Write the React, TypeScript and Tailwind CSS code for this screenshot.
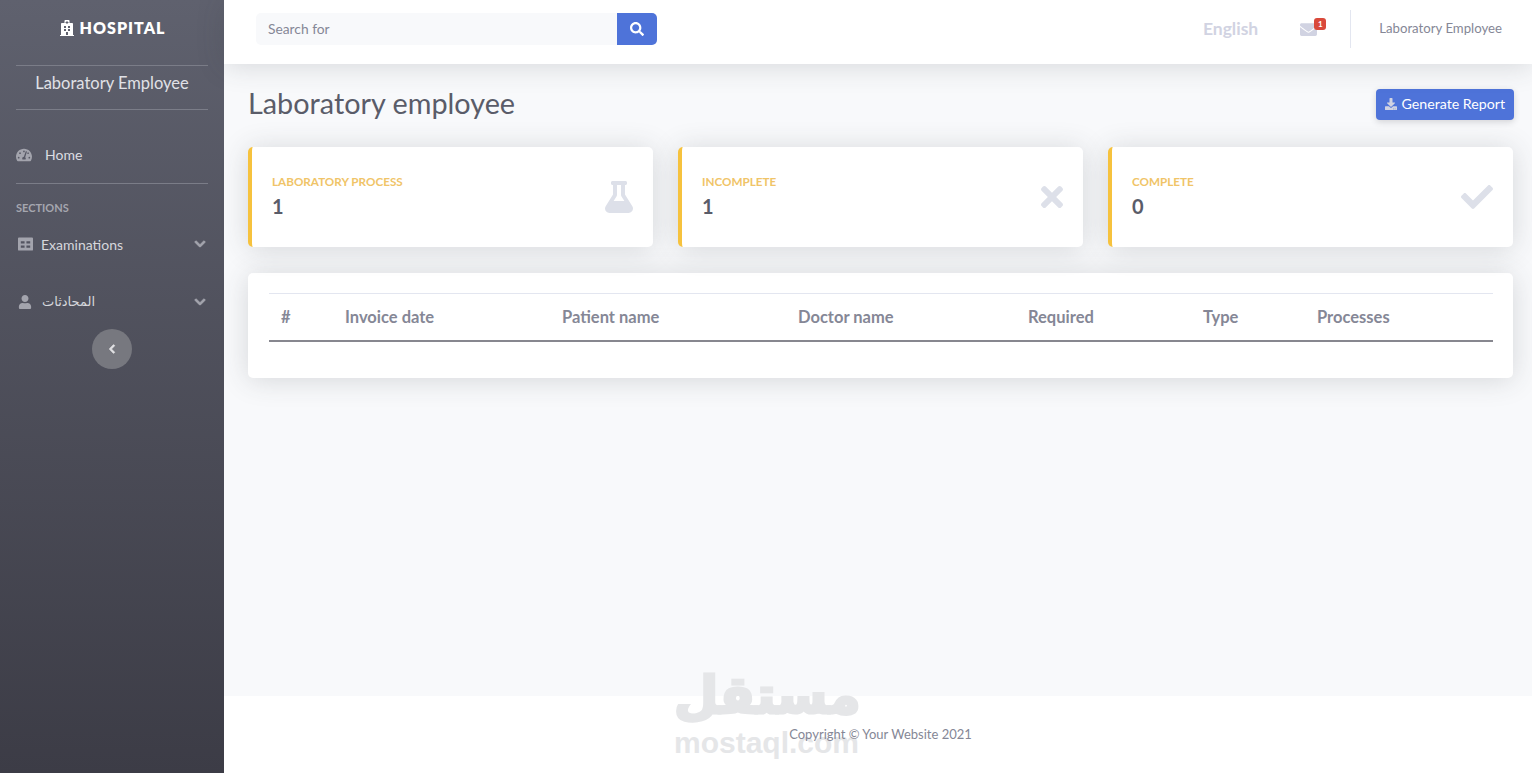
import {
  FaCheck,
  FaChevronDown,
  FaChevronLeft,
  FaDownload,
  FaEnvelope,
  FaFlask,
  FaHospital,
  FaSearch,
  FaTachometerAlt,
  FaTimes,
  FaUser,
} from 'react-icons/fa';
import type { IconType } from 'react-icons';

const stats: { title: string; value: string; Icon: IconType; iconClass: string }[] = [
  { title: 'LABORATORY PROCESS', value: '1', Icon: FaFlask, iconClass: 'w-[28px] h-[32px]' },
  { title: 'INCOMPLETE', value: '1', Icon: FaTimes, iconClass: 'w-[22px] h-[32px]' },
  { title: 'COMPLETE', value: '0', Icon: FaCheck, iconClass: 'w-[32px] h-[32px]' },
];

const columns = [
  { label: '#', width: 'w-[64px]' },
  { label: 'Invoice date', width: 'w-[217px]' },
  { label: 'Patient name', width: 'w-[236px]' },
  { label: 'Doctor name', width: 'w-[230px]' },
  { label: 'Required', width: 'w-[175px]' },
  { label: 'Type', width: 'w-[114px]' },
  { label: 'Processes', width: 'w-[188px]' },
];

function ExamIcon() {
  return (
    <svg viewBox="0 0 16 14" className="w-[15px] h-[14px] mr-[8px] ml-[2px] text-[#a3a4ad]" fill="currentColor">
      <path
        fillRule="evenodd"
        d="M1 0h14a1 1 0 0 1 1 1v12a1 1 0 0 1-1 1H1a1 1 0 0 1-1-1V1a1 1 0 0 1 1-1zM3 4v2.500h4V4zM9 4v2.500h4V4zM3 8.500V11h4V8.500zM9 8.500V11h4V8.500z"
      />
    </svg>
  );
}

function Sidebar() {
  return (
    <aside className="w-[224px] shrink-0 h-[773px] px-4 bg-gradient-to-b from-[#5f616e] to-[#3c3c46]">
      <div className="h-[65px] pb-[9px] flex items-center justify-center gap-[5px] text-white">
        <FaHospital size={16} />
        <span className="text-[16px] font-extrabold tracking-[1px]">HOSPITAL</span>
      </div>
      <div className="h-[45px] pb-[9px] border-y border-[#7b7d88] flex items-center justify-center text-[16.5px] text-[#e0e1e6]">
        Laboratory Employee
      </div>
      <div className="h-[74px] border-b border-[#7b7d88] pt-[35px] flex items-start gap-[13px] text-[14px] text-[#dcdde2]">
        <FaTachometerAlt size={16} className="mt-[2px] text-[#a3a4ad]" />
        <span className="leading-[20px]">Home</span>
      </div>
      <div className="mt-[18px] text-[11px] font-bold leading-[12px] text-[#a5a6af]">SECTIONS</div>
      <div className="mt-[20px] h-[20px] flex items-center text-[14px] text-[#d6d7dc]">
        <ExamIcon />
        <span>Examinations</span>
        <FaChevronDown size={12} className="ml-auto mr-[2px] text-[#a3a4ad] stroke-[40px]" />
      </div>
      <div className="mt-[38px] h-[20px] flex items-center text-[14px] text-[#d6d7dc]">
        <FaUser size={14} className="mr-[10px] ml-[2px] text-[#a3a4ad]" />
        <span className="font-['DejaVu_Sans',sans-serif] text-[13px]">المحادثات</span>
        <FaChevronDown size={12} className="ml-auto mr-[2px] text-[#a3a4ad] stroke-[40px]" />
      </div>
      <button className="mx-auto mt-[17px] w-[40px] h-[40px] rounded-full bg-[#77787f] flex items-center justify-center text-[#e3e3e6]">
        <FaChevronLeft size={10} className="stroke-[40px]" />
      </button>
    </aside>
  );
}

function Topbar() {
  return (
    <header className="h-[64px] bg-white shadow-[0_2px_28px_rgba(58,59,69,0.18)] flex items-center pb-[6px] pl-[32px] pr-[30px] relative">
      <div className="flex w-[401px] h-[32px]">
        <div className="flex-1 bg-[#f8f9fb] rounded-l-[5px] pl-[12px] text-[13.8px] leading-[31px] text-[#858796]">Search for</div>
        <div className="w-[40px] bg-[#4e73d9] rounded-r-[5px] flex items-center justify-center text-white">
          <FaSearch size={14} />
        </div>
      </div>
      <span className="ml-auto text-[17.5px] font-bold text-[#d1d3e2]">English</span>
      <div className="relative ml-[42px] mr-[33px] text-[#d1d3e2]">
        <FaEnvelope size={17} />
        <span className="absolute -top-[3px] left-[14px] w-[12px] h-[12px] rounded-[3px] bg-[#d9493b] text-white text-[8px] font-bold leading-[12px] text-center">1</span>
      </div>
      <div className="w-px h-[38px] bg-[#e3e6f0]"></div>
      <span className="ml-[28px] text-[13.2px] text-[#858796]">Laboratory Employee</span>
    </header>
  );
}

function StatCard({ title, value, Icon, iconClass }: (typeof stats)[number]) {
  return (
    <div className="h-[100px] rounded-[5px] bg-white border-l-4 border-[#f6c23e] shadow-[0_2px_28px_rgba(58,59,69,0.18)] flex items-center pl-[20px] pr-[20px]">
      <div className="flex-1 pt-[2px]">
        <div className="mt-[-4px] text-[11.7px] font-bold leading-[14px] text-[#f0c468]">{title}</div>
        <div className="mt-[6px] text-[20px] font-bold leading-[24px] text-[#5a5c69]">{value}</div>
      </div>
      <Icon className={`${iconClass} text-[#dde0e9]`} />
    </div>
  );
}

export default function App() {
  return (
    <div className="relative flex w-[1532px] h-[773px] overflow-hidden bg-[#f8f9fb] font-['Lato','Noto_Sans',sans-serif]">
      <Sidebar />
      <div className="flex-1 flex flex-col">
        <Topbar />
        <main className="flex-1 pl-[24px] pr-[19px]">
          <div className="h-[83px] pb-[4px] flex items-center justify-between">
            <h1 className="text-[28.8px] text-[#5a5c69]">Laboratory employee</h1>
            <button className="h-[31px] mt-[2px] mr-[-1px] px-[9px] pb-[2px] rounded-[4px] bg-[#4e73d9] text-[14.2px] text-white flex items-center gap-[4px] shadow-[0_2px_6px_rgba(58,59,69,0.2)]">
              <FaDownload size={12} className="text-[#d1d3e2]" />
              Generate Report
            </button>
          </div>
          <div className="grid grid-cols-3 gap-[25px]">
            {stats.map((stat) => (
              <StatCard key={stat.title} {...stat} />
            ))}
          </div>
          <section className="mt-[26px] h-[105px] rounded-[5px] bg-white shadow-[0_2px_28px_rgba(58,59,69,0.18)] pt-[20px] pl-[21px] pr-[18px]">
            <table className="table-fixed w-[1224px] border-t border-[#e3e6f0] text-left">
              <thead>
                <tr className="h-[47px] border-b-2 border-[#87878f]">
                  {columns.map((col) => (
                    <th key={col.label} className={`${col.width} px-[12px] pt-[2px] text-[16.5px] font-bold text-[#858796]`}>
                      {col.label}
                    </th>
                  ))}
                </tr>
              </thead>
            </table>
          </section>
        </main>
        <footer className="relative z-10 h-[77px] pl-[5px] flex items-center justify-center text-[13px] text-[#858796]">
          Copyright © Your Website 2021
        </footer>
      </div>
      {/* footer band and mostaql watermark sit behind the footer text */}
      <div className="absolute left-[224px] right-0 bottom-0 h-[77px] bg-white"></div>
      <div className="absolute left-[674px] top-[661px] w-[184px] text-center pointer-events-none text-[#e5e6e8]">
        <div className="font-['DejaVu_Sans',sans-serif] font-bold text-[51px] leading-[70px] [-webkit-text-stroke:3px_#e5e6e8]">مستقل</div>
        <div className="-mt-[3px] font-['Liberation_Sans',sans-serif] font-bold text-[30px] leading-[30px]">mostaql.com</div>
      </div>
    </div>
  );
}
